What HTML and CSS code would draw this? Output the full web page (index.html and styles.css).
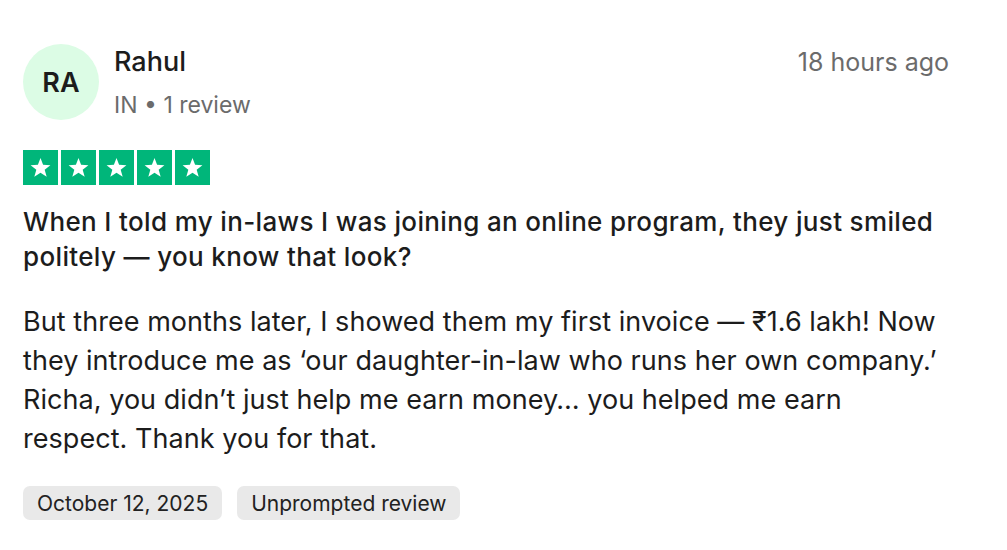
FILE: index.html
```html
<!DOCTYPE html>
<html>
<head>
<meta charset="utf-8">
<link rel="stylesheet" href="styles.css">
</head>
<body>
<article class="review">
  <header class="head">
    <div class="avatar">RA</div>
    <div class="who">
      <div class="name">Rahul</div>
      <div class="meta">IN • 1 review</div>
    </div>
    <div class="time">18 hours ago</div>
  </header>
  <div class="stars">
    <span class="star"><svg viewBox="0 0 24 24"><path d="M12 3.5l2.3 6.1 6.5.3-5.1 4 1.8 6.3L12 16.6l-5.5 3.6 1.8-6.3-5.1-4 6.5-.3z" fill="#fff"/></svg></span>
    <span class="star"><svg viewBox="0 0 24 24"><path d="M12 3.5l2.3 6.1 6.5.3-5.1 4 1.8 6.3L12 16.6l-5.5 3.6 1.8-6.3-5.1-4 6.5-.3z" fill="#fff"/></svg></span>
    <span class="star"><svg viewBox="0 0 24 24"><path d="M12 3.5l2.3 6.1 6.5.3-5.1 4 1.8 6.3L12 16.6l-5.5 3.6 1.8-6.3-5.1-4 6.5-.3z" fill="#fff"/></svg></span>
    <span class="star"><svg viewBox="0 0 24 24"><path d="M12 3.5l2.3 6.1 6.5.3-5.1 4 1.8 6.3L12 16.6l-5.5 3.6 1.8-6.3-5.1-4 6.5-.3z" fill="#fff"/></svg></span>
    <span class="star"><svg viewBox="0 0 24 24"><path d="M12 3.5l2.3 6.1 6.5.3-5.1 4 1.8 6.3L12 16.6l-5.5 3.6 1.8-6.3-5.1-4 6.5-.3z" fill="#fff"/></svg></span>
  </div>
  <h2 class="title">When I told my in-laws I was joining an online program, they just smiled politely — you know that look?</h2>
  <p class="body">But three months later, I showed them my first invoice — ₹1.6 lakh! Now they introduce me as ‘our daughter-in-law who runs her own company.’ Richa, you didn’t just help me earn money… you helped me earn respect. Thank you for that.</p>
  <div class="chips">
    <span class="chip">October 12, 2025</span>
    <span class="chip">Unprompted review</span>
  </div>
</article>
</body>
</html>
```
FILE: styles.css
```css
html, body { margin: 0; padding: 0; background: #fff; }
body { font-family: Inter, "Noto Sans", sans-serif; color: #1c1c1c; }
.review { padding: 44px 58px 0 23px; width: 926px; }
.head { display: flex; align-items: flex-start; }
.avatar {
  width: 76px; height: 76px; border-radius: 50%;
  background: #dcfce5; color: #1c1c1c;
  display: flex; align-items: center; justify-content: center;
  font-size: 27px; font-weight: 600; flex: none;
}
.who { margin-left: 15px; flex: 1; }
.name { font-size: 27px; font-weight: 500; line-height: 36px; }
.meta { font-size: 23px; color: #6b6b6b; line-height: 30px; margin-top: 10px; }
.time { font-size: 25px; color: #6b6b6b; line-height: 36px; }
.stars { display: flex; gap: 3px; margin-top: 30px; }
.star { width: 35px; height: 35px; background: #00b67a; display: flex; align-items: center; justify-content: center; }
.star svg { width: 27px; height: 27px; }
.title { font-size: 26px; font-weight: 500; line-height: 35px; margin: 19px 0 0; letter-spacing: 0.35px; }
.body { font-size: 27px; line-height: 39px; margin: 28px 0 0; letter-spacing: 0.05px; }
.chips { display: flex; gap: 15px; margin-top: 28px; }
.chip { background: #e9e9e9; border-radius: 7px; padding: 0 14px; height: 34px; display: flex; align-items: center; font-size: 21px; color: #222; }
```
